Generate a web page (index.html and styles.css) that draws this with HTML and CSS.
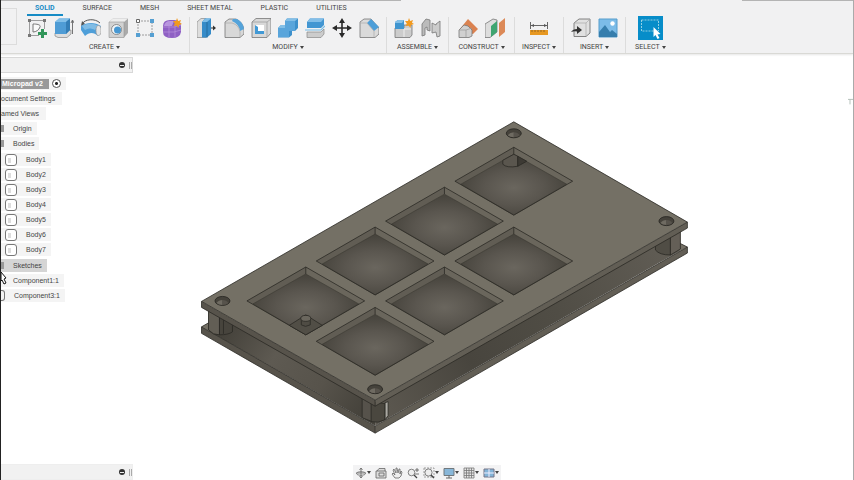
FILE: index.html
```html
<!DOCTYPE html>
<html lang="en">
<head>
<meta charset="utf-8">
<title>Micropad v2</title>
<link rel="stylesheet" href="styles.css">
</head>
<body>
<header class="ribbon">
  <div class="workspace-edge"></div>
  <div class="ribbon-main">
    <nav class="tabs">
      <button class="tab active">SOLID</button>
      <button class="tab">SURFACE</button>
      <button class="tab">MESH</button>
      <button class="tab">SHEET METAL</button>
      <button class="tab">PLASTIC</button>
      <button class="tab">UTILITIES</button>
    </nav>
    <div class="groups">
      <section class="group">
        <div class="tools">
          <button class="tool" aria-label="Create sketch"><svg viewBox="0 0 20 20"><path d="M2 2.500H18M2.500 1V18M1 17.500H12M17.500 1V11" fill="none" stroke="#888" stroke-width=".8"/><path d="M6 14V6C11 6 14 7 13 9C12 12 9 14 6 14Z" fill="#fafafa" stroke="#777"/><path d="M1 1h3v3H1zM16 1h3v3h-3zM1 16h3v3H1z" fill="#777"/><path d="M15.500 11v9M11 15.500h9" stroke="#31965a" stroke-width="3"/></svg></button>
          <button class="tool" aria-label="Extrude"><svg viewBox="0 0 20 20"><path d="M1 15V18L4 19.500H13L17 16V12Z" fill="#ddd" stroke="#888" stroke-width=".7"/><path d="M1 4L5 .500H16V12L12 16H1Z" fill="#4f9cd5"/><path d="M1 4L5 .500H16L12 4Z" fill="#82bfe8"/><path d="M12 4L16 .500V12L12 16Z" fill="#347eb6"/><path d="M18.500 16V3M17 5L18.500 2L20 5" fill="none" stroke="#555" stroke-width=".8"/></svg></button>
          <button class="tool" aria-label="Revolve"><svg viewBox="0 0 20 20"><path d="M1 6C4 1 14 0 19 5" fill="none" stroke="#555"/><path d="M0 8L1 3L4 6Z" fill="#555"/><path d="M0 8C6 4 14 4 20 8L17 18C13 14 8 14 4 18L0 12Z" fill="#4f9fd9"/><path d="M1 8C7 5 13 5 17 8L14 12C10 10 7 10 4 12Z" fill="#80bce5"/><ellipse cx="17.500" cy="12.500" rx="2.500" ry="5" fill="#e5e5e5" stroke="#999" stroke-width=".7"/></svg></button>
          <button class="tool" aria-label="Hole"><svg viewBox="0 0 20 20"><path d="M1 4L5 .500H20V15L16 19.500H1Z" fill="#aaa"/><path d="M1 4L5 .500H20L16 4Z" fill="#eee"/><path d="M1 4H16V19.500H1Z" fill="#d2d2d2" stroke="#999" stroke-width=".6"/><circle cx="8.500" cy="11.500" r="5" fill="#f1f5f8" stroke="#777" stroke-width=".8"/><circle cx="9.500" cy="12" r="3.500" fill="#4898d2"/></svg></button>
          <button class="tool" aria-label="Pattern"><svg viewBox="0 0 20 20"><path d="M3 3H17V17H3Z" fill="none" stroke="#888" stroke-width=".8" stroke-dasharray="2 1"/><path d="M1.500 1.500h3v3h-3z" fill="#fff" stroke="#666"/><path d="M15 1h4v4h-4zM1 15h4v4H1zM15 15h4v4h-4z" fill="#559fd2"/></svg></button>
          <button class="tool" aria-label="Create form"><svg viewBox="0 0 20 20"><path d="M1 8Q1 2 8 2H12Q19 2 19 8V14Q18 20 10 20Q1 20 1 14Z" fill="#8f60c4"/><path d="M2 8Q3 3 8 3H12L10 8Z" fill="#b997df"/><path d="M1 9H12L19 7M7 3V19M13 9V19M1 14H12L19 12" fill="none" stroke="#b792dc" stroke-width=".7"/><path d="M15 0l1.200 3L19 2l-1 2.800L20 6l-3 1-.5 3-2-2.500-3 .800L12.800 5.500 11 3h3Z" fill="#f29a1f"/></svg></button>
        </div>
        <button class="menu">CREATE</button>
      </section>
      <section class="group">
        <div class="tools">
          <button class="tool" aria-label="Press pull"><svg viewBox="0 0 20 20"><path d="M0 4L4 .500H9V19.500H0Z" fill="#ddd" stroke="#888" stroke-width=".7"/><path d="M5 4L8 .500H14V16L10 19.500H5Z" fill="#368bc8"/><path d="M5 4L8 .500H14L10 4Z" fill="#7dbce7"/><path d="M10 4V19.500" stroke="#256d9f"/><path d="M14 10H18" stroke="#333"/><path d="M16 7.500L19 10L16 12.500Z" fill="#333"/></svg></button>
          <button class="tool" aria-label="Fillet"><svg viewBox="0 0 20 20"><path d="M1 4L5 1H12Q19 4 20 12V16L16 19.500H1Z" fill="#d8d8d8" stroke="#777" stroke-width=".8"/><path d="M9 1H13Q19 4 20 11L16 13Q15 6 8 3Z" fill="#54a3da"/><path d="M1 5H8Q15 7 16 14V19" fill="none" stroke="#aaa" stroke-width=".7"/></svg></button>
          <button class="tool" aria-label="Shell"><svg viewBox="0 0 20 20"><path d="M1 4L5 .500H20V15L16 19.500H1Z" fill="#d8d8d8" stroke="#777" stroke-width=".8"/><path d="M1 4H16V19M16 4L20 1" fill="none" stroke="#999" stroke-width=".7"/><path d="M4 7H13V16H4Z" fill="#fff"/><path d="M4 7L7 9V13H13V16H4Z" fill="#4299d5"/></svg></button>
          <button class="tool" aria-label="Combine"><svg viewBox="0 0 20 20"><path d="M7 3L9 .500H20V10L17 13H14V17L11 19.500H0V10L3 7H7Z" fill="#3d90cb"/><path d="M7 3L9 .500H20L17 3ZM0 10L3 7H7V10Z" fill="#83bfe7"/><path d="M7 3H17V13H11V19H0V10H7Z" fill="#59a5db"/></svg></button>
          <button class="tool" aria-label="Split"><svg viewBox="0 0 20 20"><path d="M2 4L5 .500H19V7L16 10H2Z" fill="#4296d2"/><path d="M2 4L5 .500H19L16 4Z" fill="#82bee8"/><path d="M0 12H16L20 8" fill="none" stroke="#77bce5" stroke-width="1.200"/><path d="M2 14H16L19 11V16L16 19.500H2Z" fill="#ccc" stroke="#888" stroke-width=".7"/></svg></button>
          <button class="tool" aria-label="Move"><svg viewBox="0 0 20 20"><path d="M10 3V17M3 10H17" stroke="#292929" stroke-width="1.600"/><path d="M10 0L13 5H7ZM10 20L7 15H13ZM0 10L5 7V13ZM20 10L15 13V7Z" fill="#292929"/></svg></button>
          <button class="tool" aria-label="Chamfer"><svg viewBox="0 0 20 20"><path d="M1 4L5 1H12L20 10V16L16 19.500H1Z" fill="#dadada" stroke="#777" stroke-width=".8"/><path d="M12 1L20 9L15 13L8 5Z" fill="#4d9ed8"/><path d="M1 5H8L15 13V19" fill="none" stroke="#aaa" stroke-width=".7"/></svg></button>
        </div>
        <button class="menu">MODIFY</button>
      </section>
      <section class="group">
        <div class="tools">
          <button class="tool" aria-label="New component"><svg viewBox="0 0 20 20"><path d="M1 10H10V7H18V17L16 19.500H1Z" fill="#ccc" stroke="#777" stroke-width=".8"/><path d="M10 11V19M10 11H17" stroke="#eee"/><path d="M1 4L4 2H10V11H1Z" fill="#3f95d0"/><path d="M1 4L4 2H10L8 5H1Z" fill="#83bfe7"/><path d="M15 0l1.200 3L19 2l-1 2.800L20 6l-3 1-.5 3-2-2.500-3 .800L12.800 5.500 11 3h3Z" fill="#f29a1f"/></svg></button>
          <button class="tool" aria-label="Joint"><svg viewBox="0 0 20 20"><path d="M1 6L5 1L9 2V13L6 12V9L4 10V17L1 18Z" fill="#bbb" stroke="#777" stroke-width=".8"/><path d="M11 5L15 7V6L19 3V18L16 19L15 14L11 15Z" fill="#ccc" stroke="#777" stroke-width=".8"/></svg></button>
        </div>
        <button class="menu">ASSEMBLE</button>
      </section>
      <section class="group wide">
        <div class="tools">
          <button class="tool" aria-label="Offset plane"><svg viewBox="0 0 20 20"><path d="M10 1L20 11L15 16L1 12Z" fill="#db8250"/><path d="M1 12L6 7L10 8L14 12V18L11 19.500H1Z" fill="#d0d0d0" stroke="#777" stroke-width=".8"/><path d="M1 12H8L14 10M8 12V19" fill="none" stroke="#999" stroke-width=".7"/></svg></button>
          <button class="tool" aria-label="Midplane"><svg viewBox="0 0 20 20"><path d="M0 6L8 1L12 2V14L5 19.500H0Z" fill="#ddd" stroke="#777" stroke-width=".8"/><path d="M6 8L12 3V14L6 19Z" fill="#3fa571"/><path d="M14 5L20 0V14L14 19Z" fill="#dc8957"/></svg></button>
        </div>
        <button class="menu">CONSTRUCT</button>
      </section>
      <section class="group">
        <div class="tools">
          <button class="tool" aria-label="Measure"><svg viewBox="0 0 20 20"><path d="M1.500 4V11M18.500 4V11M2 7.500H18" stroke="#666"/><path d="M2 7.500L5 6V9ZM18 7.500L15 6V9Z" fill="#555"/><path d="M1 12H19V17H1Z" fill="#e79821"/><path d="M3 12v2M6 12v2M9 12v2M12 12v2M15 12v2" stroke="#855c24" stroke-width=".8"/></svg></button>
        </div>
        <button class="menu">INSPECT</button>
      </section>
      <section class="group">
        <div class="tools">
          <button class="tool" aria-label="Insert derive"><svg viewBox="0 0 20 20"><path d="M3 5L8 1H19V15L15 18.500H3Z" fill="#e1e1e1" stroke="#777" stroke-width=".9"/><path d="M3 5H15V18M15 5L19 1" fill="none" stroke="#aaa" stroke-width=".7"/><path d="M0 14Q2 11 6 11V8L11 12L6 16V13.500Q3 13 0 14Z" fill="#333"/></svg></button>
          <button class="tool" aria-label="Insert image"><svg viewBox="0 0 20 20"><path d="M1 1H19V19H1Z" fill="#7cbce8" stroke="#579dcc"/><circle cx="14.500" cy="5.500" r="2.200" fill="#fff"/><path d="M1 14L7 7L12 14L14 12L19 16V19H1Z" fill="#367ead"/></svg></button>
        </div>
        <button class="menu">INSERT</button>
      </section>
      <section class="group wide last">
        <div class="tools">
          <button class="tool selected" aria-label="Select"><svg viewBox="0 0 24 24"><path d="M3 4H20V15H3Z" fill="none" stroke="#b5dfe9" stroke-width=".8" stroke-dasharray="2 1"/><path d="M15 11L22 18L19 18.500L21 22L19 23L17 19L15 21Z" fill="#fff"/></svg></button>
        </div>
        <button class="menu">SELECT</button>
      </section>
    </div>
  </div>
</header>
<main class="workspace">
  <svg class="model" viewBox="0 54 854 426" role="img" aria-label="Micropad enclosure">
    <defs>
      <radialGradient id="floor" cx=".5" cy=".55" r=".55"><stop offset="0" stop-color="#6a665e"/><stop offset=".5" stop-color="#5a564f"/><stop offset="1" stop-color="#45423b"/></radialGradient>
      <linearGradient id="gapLeft" gradientUnits="userSpaceOnUse" x1="232" y1="320" x2="365" y2="405"><stop offset="0" stop-color="#45423b"/><stop offset=".35" stop-color="#5e5a52"/><stop offset=".7" stop-color="#57534b"/><stop offset="1" stop-color="#46433c"/></linearGradient>
      <linearGradient id="gapRight" gradientUnits="userSpaceOnUse" x1="385" y1="410" x2="670" y2="245"><stop offset="0" stop-color="#5b574f"/><stop offset=".3" stop-color="#48453e"/><stop offset=".6" stop-color="#504d45"/><stop offset="1" stop-color="#615d55"/></linearGradient>
      <g id="pocket">
        <path class="wall-left" d="M-59 0L0-34V-27L-53 3Z"/>
        <path class="wall-right" d="M59 0L0-34V-27L53 3Z"/>
        <path class="pocket-floor" d="M-53 3L0-27L53 3L0 34Z"/>
        <path class="edge" d="M-59 0L0-34L59 0L0 34ZM0-34V-27"/>
      </g>
      <g id="hole">
        <ellipse class="bore" rx="7.500" ry="4.500"/>
        <path d="M-6 2Q-4-1 0-1V4Q-4 4-6 2Z" fill="#6f6b62"/>
        <path d="M0-1Q4-1 6 2Q4 4 0 4Z" fill="#57534c"/>
      </g>
    </defs>
    <path class="side-left" d="M201 327L375 426.500V433.500L201 333.500Z"/>
    <path class="side-right" d="M375 426.500L688 247V253L375 433.500Z"/>
    <path class="top" d="M201 327L208 323L240 338L215 335ZM680 243L688 247L660 262Z"/>
    <path d="M208 310L375 405V426L213 334L208 330Z" fill="url(#gapLeft)"/>
    <path d="M375 405L680 231V251L375 426Z" fill="url(#gapRight)"/>
    <path d="M201 327L375 426.500L688 247M201 327V333.500L375 433.500L688 253V247M375 426.500V433.500M201 327L208 323M680 243L688 247" class="edge"/>
    <g class="edge">
      <path d="M208 310L219 315V335L213 334L208 330Z" fill="#625e55"/><path d="M219 315L232 324V332Q228 335 219 335Z" fill="#47443d"/><path d="M223 318V334" />
      <path d="M362 398L372 402V422L362 418Z" fill="#56524b"/><path d="M371 402L385 404V420Q378 424 371 422Z" fill="#4a473f"/><path d="M385 403L388 402V416L385 420Z" fill="#aaa9a2"/>
      <path d="M656 244V250Q660 255 671 255V235Z" fill="#504d45"/><path d="M671 235L681 230V249L671 255Z" fill="#645f57"/>
    </g>
    <path class="side-left" d="M201 301.500L375 400.500V406.500L201 307.500Z"/>
    <path class="side-right" d="M375 400.500L688 222V228L375 406.500Z"/>
    <path class="top" d="M201 301.500L514 121.500L688 222L375 400.500Z"/>
    <path class="edge" d="M201 301.500L514 121.500L688 222L375 400.500ZM201 301.500V307.500L375 406.500L688 228V222M375 400.500V406.500"/>
    <use href="#pocket" x="514" y="181"/><use href="#pocket" x="444.500" y="221"/><use href="#pocket" x="375" y="261"/><use href="#pocket" x="305.500" y="301"/>
    <use href="#pocket" x="514" y="261"/><use href="#pocket" x="444.500" y="301"/><use href="#pocket" x="375" y="341.500"/>
    <g class="edge">
      <path d="M503 160L514 154L518 156V166Q507 168 503 164Z" fill="#5a564e"/><path d="M518 156L527 161L518 166Z" fill="#3d3a34"/>
      <path d="M289 325.500L305.500 315L322 325.500L305.500 335Z" fill="#514e46"/><path d="M301 319V325Q305 328 310 325V319Z" fill="#4f4c44"/><ellipse cx="305.500" cy="318.500" rx="5" ry="3" fill="#6b675e"/>
    </g>
    <use href="#hole" x="514" y="133"/><use href="#hole" x="667" y="221"/><use href="#hole" x="222" y="301"/><use href="#hole" x="375" y="389.500"/>
    <path d="M849 99H854M851 99V104" stroke="#b6c2bb" fill="none"/>
  </svg>
  <aside class="browser">
    <div class="panel-bar">
      <button class="collapse" aria-label="Collapse browser"></button><span class="grip"></span>
    </div>
    <ul class="tree">
      <li class="row root"><span class="name">Micropad v2</span><input class="activate" type="radio" checked aria-label="Activate Micropad v2"></li>
      <li class="row clipped">Document Settings</li>
      <li class="row clipped">Named Views</li>
      <li class="row folder">Origin</li>
      <li class="row folder">Bodies</li>
      <li>
        <ul class="bodies">
          <li class="row body">Body1</li>
          <li class="row body">Body2</li>
          <li class="row body">Body3</li>
          <li class="row body">Body4</li>
          <li class="row body">Body5</li>
          <li class="row body">Body6</li>
          <li class="row body">Body7</li>
        </ul>
      </li>
      <li class="row folder hover">Sketches</li>
      <li class="row component">Component1:1</li>
      <li class="row component linked">Component3:1</li>
    </ul>
    <div class="panel-bar comments">
      <button class="collapse" aria-label="Expand comments"></button><span class="grip"></span>
    </div>
    <svg class="cursor" viewBox="0 0 7 13"><path d="M0 0L5 6L3 7L5 11L3 12L1 8L0 9Z" fill="#fff" stroke="#111"/></svg>
  </aside>
  <nav class="view-bar">
    <button class="view drop" aria-label="Orbit"><svg viewBox="0 0 12 12"><path d="M6 1V11M1 6H11M4.500 3L6 1L7.500 3M4.500 9L6 11L7.500 9" fill="none" stroke="#666" stroke-width=".8"/><ellipse cx="6" cy="6.500" rx="4.500" ry="1.800" fill="none" stroke="#666" stroke-width=".8"/></svg></button>
    <button class="view" aria-label="Look at"><svg viewBox="0 0 12 12"><path d="M1 4H11V11H1ZM2 4L4 1.500H10V4M4 6H9V9H4Z" fill="#ddd" stroke="#666" stroke-width=".8"/></svg></button>
    <button class="view" aria-label="Pan"><svg viewBox="0 0 12 12"><path d="M4 11L1 7L2 6L4 8L2 3L3 2L5 6V1L6 1L7 6L8 2L9 2L9 7L10 4L11 5L10 9L8 11Z" fill="#eee" stroke="#666" stroke-width=".8"/></svg></button>
    <button class="view" aria-label="Zoom"><svg viewBox="0 0 12 12"><circle cx="4.500" cy="5.500" r="3.300" fill="#eee" stroke="#666" stroke-width=".8"/><path d="M7 8L10 11" stroke="#444" stroke-width="1.300"/><path d="M10 1V5M8 3H12M8 7H12" stroke="#555" stroke-width=".8"/></svg></button>
    <button class="view drop" aria-label="Fit"><svg viewBox="0 0 12 12"><path d="M1 1H11V10H1Z" fill="none" stroke="#888" stroke-width=".8" stroke-dasharray="2 1"/><circle cx="5.500" cy="5.500" r="3.600" fill="#eee" stroke="#666" stroke-width=".8"/><path d="M8 8L11 11" stroke="#444" stroke-width="1.500"/></svg></button>
    <button class="view drop" aria-label="Display settings"><svg viewBox="0 0 12 12"><path d="M1 1.500H11V8.500H1Z" fill="#88b7d9" stroke="#71797e"/><path d="M6 8.500V11M3 11H9" stroke="#666"/></svg></button>
    <button class="view drop" aria-label="Grid and snaps"><svg viewBox="0 0 12 12"><path d="M1 1H11V11H1ZM3.500 1V11M6 1V11M8.500 1V11M1 3.500H11M1 6H11M1 8.500H11" fill="#e5e5e5" stroke="#777" stroke-width=".8"/></svg></button>
    <button class="view drop" aria-label="Viewports"><svg viewBox="0 0 12 12"><path d="M1 2H11V10H1Z" fill="#83b4d8" stroke="#778"/><path d="M6 2V10M1 6H11" stroke="#eef"/></svg></button>
  </nav>
</main>
</body>
</html>
```

FILE: styles.css
```css
* { box-sizing: border-box; }

body {
  margin: 0;
  min-height: 100vh;
  display: flex;
  flex-direction: column;
  border-left: 1px solid #222;
  border-right: 1px solid #aaa;
  background: #fff;
  color: #444;
  font: 7px/8px "Liberation Sans", Arial, sans-serif;
  overflow: hidden;
}

button {
  margin: 0;
  padding: 0;
  border: 0;
  background: none;
  color: inherit;
  font: inherit;
}

svg { display: block; }

/* Ribbon */
.ribbon {
  display: flex;
  background: linear-gradient(90deg, #b4b4b4 47%, transparent 47% 87%, #b4b4b4 87%) top / 100% 1px no-repeat, #f1f1f2;
  border-bottom: 1px solid #d9d9d5;
  box-shadow: 0 1px 2px #e6e6e6;
  font-family: Roboto, sans-serif;
}

.workspace-edge {
  width: 16px;
  margin: 8px 3px 8px 0;
  border: 1px solid #dcdcdc;
  border-left: 0;
}

.ribbon-main { flex: 1; }

.tabs {
  display: flex;
  gap: 12px;
  padding: 4px 0 0 7px;
}

.tab {
  padding: 0 8px 2px;
  border-bottom: 2px solid transparent;
}

.tab.active {
  color: #168bc5;
  border-color: #168bc5;
  font-weight: 700;
}

.groups {
  display: flex;
  padding-top: 1px;
  height: 37px;
}

.group {
  display: flex;
  flex-direction: column;
  align-items: center;
  justify-content: space-between;
  padding: 0 7px 2px;
  border-right: 1px solid #dcdcdc;
}

.group.wide { padding: 0 9px 2px; }
.group.last { border-right: 0; }

.tools {
  display: flex;
  align-items: center;
  gap: 7px;
  height: 22px;
}

.tool, .tool svg { width: 20px; height: 20px; }

.tool.selected, .tool.selected svg {
  width: 25px;
  height: 24px;
}

.tool.selected { background: #078dc9; }

.menu {
  display: flex;
  align-items: center;
  gap: 2px;
}

.menu::after, .drop::after {
  content: "";
  border: 2px solid transparent;
  border-top: 3px solid #444;
  border-bottom: 0;
}

/* Workspace layers share one grid area */
.workspace {
  flex: 1;
  display: grid;
  grid-template: minmax(0, 1fr) / minmax(0, 1fr);
}

.model, .browser, .view-bar { grid-area: 1 / 1; }

.model {
  width: 100%;
  height: 100%;
}

.edge { stroke: #2b2924; stroke-width: .8; }
path.edge { fill: none; }
.top { fill: #747065; }
.side-left { fill: #57534b; }
.side-right { fill: #625e55; }
.wall-left { fill: #615d54; }
.wall-right { fill: #6a665c; }
.pocket-floor { fill: url(#floor); stroke: #38352f; stroke-width: .6; }
.bore { fill: #45423b; stroke: #25231f; stroke-width: .8; }

/* Browser panel */
.browser {
  position: relative;
  z-index: 1;
  width: 132px;
  display: flex;
  flex-direction: column;
  padding-top: 3px;
  overflow: hidden;
}

.panel-bar {
  display: flex;
  align-items: center;
  justify-content: flex-end;
  gap: 4px;
  height: 16px;
  background: #f1f1f1;
  border: 1px solid #d8d8d8;
  border-left: 0;
}

.comments { margin-top: auto; border-color: #eee; }

.collapse {
  width: 6px;
  height: 6px;
  border-radius: 50%;
  background: linear-gradient(#eee, #eee) center / 4px 1px no-repeat, #333;
}

.grip {
  width: 3px;
  height: 7px;
  border: 1px solid #aaa;
  border-width: 0 1px;
}

ul {
  margin: 0;
  padding: 0;
  list-style: none;
}

.tree {
  display: flex;
  flex-direction: column;
  align-items: flex-start;
  gap: 2px;
  padding-top: 4px;
}

.bodies {
  display: flex;
  flex-direction: column;
  gap: 2px;
  padding: 1px 0;
}

.row {
  display: flex;
  align-items: center;
  height: 13px;
  padding-right: 5px;
  background: #f4f4f4;
  white-space: nowrap;
}

.name {
  padding: 1px 6px 1px 1px;
  background: #999;
  color: #fff;
  font-weight: 700;
}

.activate {
  appearance: none;
  width: 9px;
  height: 9px;
  margin: 0 0 0 3px;
  border: 1px solid #555;
  border-radius: 50%;
  background: radial-gradient(circle, #222 0 1px, #fff 2px);
}

.clipped { margin-left: -5px; padding-right: 7px; }
.folder { gap: 9px; }

.folder::before {
  content: "";
  width: 3px;
  height: 7px;
  background: #999;
}

.hover { background: #d5d5d5; }

.body { gap: 9px; padding-left: 4px; }

.body::before {
  content: "";
  width: 10px;
  height: 10px;
  border: 1px solid #777;
  border-radius: 3px;
  background: linear-gradient(#ddd, #ddd) 2px 3px / 3px 5px no-repeat, #fff;
}

.component { padding-left: 12px; }

.linked { padding-left: 0; gap: 9px; }

.linked::before {
  content: "";
  width: 3px;
  height: 9px;
  border: 1px solid #777;
  border-left: 0;
  border-radius: 0 3px 3px 0;
}

.cursor {
  position: absolute;
  left: 0;
  top: 218px;
  width: 7px;
  height: 13px;
}

/* Navigation bar */
.view-bar {
  align-self: end;
  justify-self: center;
  display: flex;
  align-items: center;
  gap: 4px;
  height: 15px;
  padding: 0 2px;
  background: #f3f3f4;
}

.view {
  display: flex;
  align-items: center;
}

.view svg { width: 12px; height: 12px; }
```
